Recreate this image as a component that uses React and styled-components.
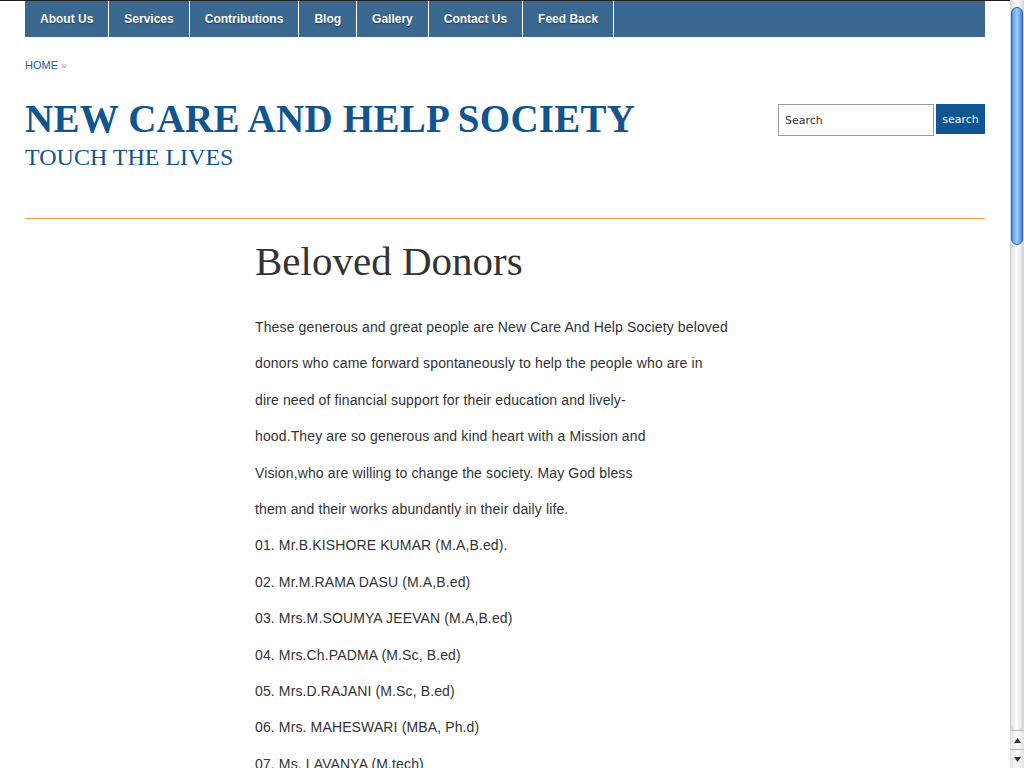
import styled, { createGlobalStyle } from 'styled-components';

const navItems = [
  'About Us',
  'Services',
  'Contributions',
  'Blog',
  'Gallery',
  'Contact Us',
  'Feed Back',
];

const intro = [
  'These generous and great people are New Care And Help Society beloved',
  'donors who came forward spontaneously to help the people who are in',
  'dire need of financial support for their education and lively-',
  'hood.They are so generous and kind heart with a Mission and',
  'Vision,who are willing to change the society. May God bless',
  'them and their works abundantly in their daily life.',
];

const donors = [
  '01. Mr.B.KISHORE KUMAR (M.A,B.ed).',
  '02. Mr.M.RAMA DASU (M.A,B.ed)',
  '03. Mrs.M.SOUMYA JEEVAN (M.A,B.ed)',
  '04. Mrs.Ch.PADMA (M.Sc, B.ed)',
  '05. Mrs.D.RAJANI (M.Sc, B.ed)',
  '06. Mrs. MAHESWARI (MBA, Ph.d)',
  '07. Ms. LAVANYA (M.tech)',
  '08. Mr.K.SRINIVAS (M.A)',
];

const App = () => {
  return (
    <Screen>
      <GlobalStyle />
      <Page>
        <Wrapper>
          <Nav>
            {navItems.map((item) => (
              <NavItem key={item} href="#">
                {item}
              </NavItem>
            ))}
          </Nav>
          <Breadcrumb>
            <a href="#">HOME</a> <span>»</span>
          </Breadcrumb>
          <Header>
            <Brand>
              <Title>NEW CARE AND HELP SOCIETY</Title>
              <Tagline>TOUCH THE LIVES</Tagline>
            </Brand>
            <SearchForm onSubmit={(e) => e.preventDefault()}>
              <SearchInput type="text" placeholder="Search" />
              <SearchButton type="submit">search</SearchButton>
            </SearchForm>
          </Header>
          <Content>
            <Sidebar />
            <Main>
              <Heading>Beloved Donors</Heading>
              {intro.map((line) => (
                <Line key={line}>{line}</Line>
              ))}
              {donors.map((line) => (
                <Line key={line}>{line}</Line>
              ))}
            </Main>
          </Content>
        </Wrapper>
      </Page>
      <ScrollBar>
        <Thumb />
        <Track />
        <Arrow>
          <svg width="7" height="5" viewBox="0 0 7 5">
            <path d="M3.5 0 L7 5 L0 5 Z" fill="#333" />
          </svg>
        </Arrow>
        <Arrow>
          <svg width="7" height="5" viewBox="0 0 7 5">
            <path d="M0 0 L7 0 L3.5 5 Z" fill="#333" />
          </svg>
        </Arrow>
      </ScrollBar>
    </Screen>
  );
};

const GlobalStyle = createGlobalStyle`
  html, body {
    margin: 0;
    padding: 0;
    background: #fff;
    overflow: hidden;
  }
  * {
    box-sizing: border-box;
  }
`;

const Screen = styled.div`
  display: flex;
  width: 100%;
  height: 100vh;
  overflow: hidden;
`;
const Page = styled.div`
  flex: 1;
  min-width: 0;
  border-top: 1px solid #1c1c1c;
  overflow: hidden;
`;
const Wrapper = styled.div`
  width: 960px;
  margin: 0 auto;
`;
const Nav = styled.nav`
  display: flex;
  height: 36px;
  background-color: #3b6890;
`;
const NavItem = styled.a`
  display: block;
  padding: 0 15px;
  border-right: 1px solid #fff;
  color: #fff;
  font: bold 12px 'Liberation Sans', Arial, sans-serif;
  line-height: 36px;
  text-decoration: none;
  text-shadow: 0 1px 1px rgba(0, 0, 0, 0.45);
`;
const Breadcrumb = styled.div`
  margin-top: 21px;
  font: 11px/14px 'Liberation Sans', Arial, sans-serif;
  a {
    color: #1b5a9c;
    text-decoration: none;
  }
  span {
    color: #9a9a9a;
    font-size: 10px;
  }
`;
const Header = styled.header`
  display: flex;
  justify-content: space-between;
  align-items: flex-start;
  margin-top: 26px;
  padding-bottom: 49px;
  border-bottom: 1px solid #f5a034;
`;
const Brand = styled.div`
  display: flex;
  flex-direction: column;
`;
const Title = styled.h1`
  margin: 0;
  font: bold 39px/39px 'Liberation Serif', 'Times New Roman', serif;
  letter-spacing: 0.25px;
  color: #11558f;
`;
const Tagline = styled.h2`
  margin: 7px 0 0;
  font: normal 24px/24px 'Liberation Serif', 'Times New Roman', serif;
  color: #11558f;
`;
const SearchForm = styled.form`
  display: flex;
  align-items: flex-start;
  gap: 2px;
  margin-top: 5px;
`;
const SearchInput = styled.input`
  width: 156px;
  height: 32px;
  padding: 0 6px;
  border: 1px solid #9c9c9c;
  outline: none;
  font: 11px 'DejaVu Sans', sans-serif;
  color: #333;
  &::placeholder {
    color: #333;
  }
`;
const SearchButton = styled.button`
  width: 49px;
  height: 30px;
  padding: 0;
  border: none;
  background-color: #0f5592;
  color: #fff;
  font: 11px 'DejaVu Sans', sans-serif;
`;
const Content = styled.div`
  display: grid;
  grid-template-columns: 230px 1fr;
`;
const Sidebar = styled.aside``;
const Main = styled.main`
  display: flex;
  flex-direction: column;
`;
const Heading = styled.h2`
  margin: 18px 0 23px;
  font: normal 41px/49px 'Liberation Serif', 'Times New Roman', serif;
  color: #333;
`;
const Line = styled.p`
  margin: 0;
  font: 14px/36.4px 'Liberation Sans', Arial, sans-serif;
  letter-spacing: 0.13px;
  color: #333;
  white-space: nowrap;
`;
const ScrollBar = styled.div`
  display: flex;
  flex-direction: column;
  width: 14px;
  flex-shrink: 0;
  height: 100vh;
  background: linear-gradient(to right, #d6d6d6, #f7f7f7 40%, #f7f7f7 60%, #d6d6d6);
`;
const Thumb = styled.div`
  width: 12px;
  height: 238px;
  margin: 7px 0 0 1px;
  border: 1px solid #2f63b8;
  border-radius: 6px;
  background: linear-gradient(to right, #4f93e6, #9ccbf9 45%, #7db6f2 70%, #3f82dc);
`;
const Track = styled.div`
  flex: 1;
  margin: 2px 1px 0;
  border-radius: 0 0 6px 6px;
  background: linear-gradient(to right, #e2e2e2, #fdfdfd 45%, #ececec 80%, #d0d0d0);
  box-shadow: 0 1px 1px rgba(0, 0, 0, 0.15);
`;
const Arrow = styled.div`
  display: flex;
  align-items: center;
  justify-content: center;
  height: 19px;
  border-top: 1px solid #bdbdbd;
  background: linear-gradient(to right, #e4e4e4, #fafafa 50%, #e4e4e4);
`;

export default App;
